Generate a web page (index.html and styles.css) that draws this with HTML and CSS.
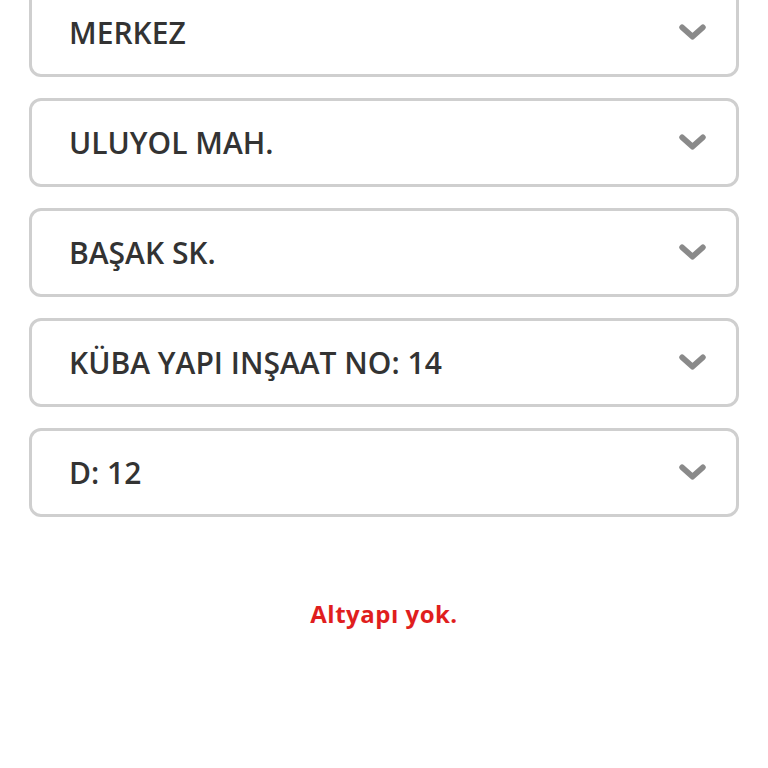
FILE: index.html
```html
<!DOCTYPE html>
<html lang="tr">
<head>
<meta charset="utf-8">
<link rel="stylesheet" href="styles.css">
</head>
<body>
<div class="page">
  <div class="selects">
    <div class="select"><span class="label">MERKEZ</span><svg class="chev" viewBox="0 0 26 16"><path d="M3 3 L13 12 L23 3"/></svg></div>
    <div class="select"><span class="label">ULUYOL MAH.</span><svg class="chev" viewBox="0 0 26 16"><path d="M3 3 L13 12 L23 3"/></svg></div>
    <div class="select"><span class="label">BAŞAK SK.</span><svg class="chev" viewBox="0 0 26 16"><path d="M3 3 L13 12 L23 3"/></svg></div>
    <div class="select"><span class="label">KÜBA YAPI INŞAAT NO: 14</span><svg class="chev" viewBox="0 0 26 16"><path d="M3 3 L13 12 L23 3"/></svg></div>
    <div class="select"><span class="label">D: 12</span><svg class="chev" viewBox="0 0 26 16"><path d="M3 3 L13 12 L23 3"/></svg></div>
  </div>
  <p class="message">Altyapı yok.</p>
</div>
</body>
</html>
```
FILE: styles.css
```css
html, body {
  margin: 0;
  padding: 0;
  background: #ffffff;
}
body {
  font-family: "Open Sans", "Noto Sans", sans-serif;
  overflow: hidden;
}
.page {
  padding: 0 29px;
  margin-top: -12px;
}
.selects {
  display: flex;
  flex-direction: column;
  gap: 21px;
}
.select {
  box-sizing: border-box;
  height: 89px;
  border: 3px solid #cfcfcf;
  border-radius: 12px;
  display: flex;
  align-items: center;
  justify-content: space-between;
  padding: 0 30px 0 37px;
}
.label {
  font-size: 30px;
  font-weight: 600;
  color: #333333;
}
.chev {
  width: 27px;
  height: 17px;
  fill: none;
  stroke: #8a8a8a;
  stroke-width: 5.5;
  stroke-linecap: round;
  stroke-linejoin: round;
}
.message {
  margin: 80px 0 0;
  text-align: center;
  font-size: 24px;
  font-weight: 700;
  letter-spacing: 0.5px;
  color: #e01e1e;
}
```
